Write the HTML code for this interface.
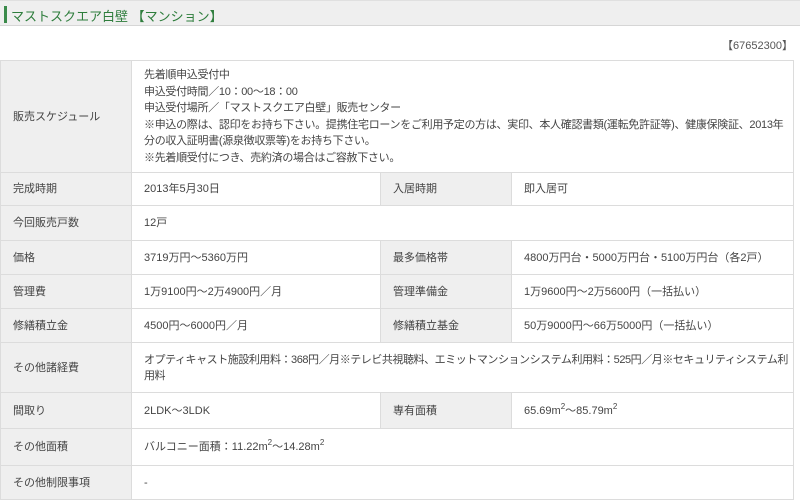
<!DOCTYPE html>
<html><head><meta charset="utf-8"><style>
body{margin:0;width:800px;height:500px;background:#fff;font-family:"Liberation Sans","Noto Sans CJK JP",sans-serif;font-size:11px;color:#444;position:relative;overflow:hidden}
.hd{position:absolute;left:0;top:0;width:800px;height:26px;background:#efefef;border-bottom:1px solid #d6d6d6;border-top:1px solid #e0e0e0;box-sizing:border-box}
.hd .bar{position:absolute;left:4px;top:5px;width:3px;height:17px;background:#3a8a4a}
.hd .t{position:absolute;left:11px;top:5px;font-size:13px;color:#2e7d3c}
.code{position:absolute;right:7px;top:37px;font-size:11px;color:#555}
.c{position:absolute;box-sizing:border-box;border:1px solid #dcdcdc;padding:0 12px;display:flex;align-items:center;line-height:16px}
.l{background:#efefef}
.tight{letter-spacing:-0.3px;padding-right:2px}
sup{font-size:8px;vertical-align:5px;line-height:0}
</style></head><body>
<div class="hd"><div class="bar"></div><div class="t">マストスクエア白壁 【マンション】</div></div>
<div class="code">【67652300】</div>

<div class="c l" style="left:0;top:60px;width:132px;height:113px">販売スケジュール</div>
<div class="c tight" style="left:131px;top:60px;width:663px;height:113px;line-height:16.5px">先着順申込受付中<br>申込受付時間／10：00～18：00<br>申込受付場所／「マストスクエア白壁」販売センター<br>※申込の際は、認印をお持ち下さい。提携住宅ローンをご利用予定の方は、実印、本人確認書類(運転免許証等)、健康保険証、2013年分の収入証明書(源泉徴収票等)をお持ち下さい。<br>※先着順受付につき、売約済の場合はご容赦下さい。</div>

<div class="c l" style="left:0;top:172px;width:132px;height:34px">完成時期</div>
<div class="c" style="left:131px;top:172px;width:250px;height:34px">2013年5月30日</div>
<div class="c l" style="left:380px;top:172px;width:132px;height:34px">入居時期</div>
<div class="c" style="left:511px;top:172px;width:283px;height:34px">即入居可</div>

<div class="c l" style="left:0;top:205px;width:132px;height:36px">今回販売戸数</div>
<div class="c" style="left:131px;top:205px;width:663px;height:36px">12戸</div>

<div class="c l" style="left:0;top:240px;width:132px;height:35px">価格</div>
<div class="c" style="left:131px;top:240px;width:250px;height:35px">3719万円～5360万円</div>
<div class="c l" style="left:380px;top:240px;width:132px;height:35px">最多価格帯</div>
<div class="c" style="left:511px;top:240px;width:283px;height:35px">4800万円台・5000万円台・5100万円台（各2戸）</div>

<div class="c l" style="left:0;top:274px;width:132px;height:35px">管理費</div>
<div class="c" style="left:131px;top:274px;width:250px;height:35px">1万9100円～2万4900円／月</div>
<div class="c l" style="left:380px;top:274px;width:132px;height:35px">管理準備金</div>
<div class="c" style="left:511px;top:274px;width:283px;height:35px">1万9600円～2万5600円（一括払い）</div>

<div class="c l" style="left:0;top:308px;width:132px;height:35px">修繕積立金</div>
<div class="c" style="left:131px;top:308px;width:250px;height:35px">4500円～6000円／月</div>
<div class="c l" style="left:380px;top:308px;width:132px;height:35px">修繕積立基金</div>
<div class="c" style="left:511px;top:308px;width:283px;height:35px">50万9000円～66万5000円（一括払い）</div>

<div class="c l" style="left:0;top:342px;width:132px;height:51px">その他諸経費</div>
<div class="c" style="left:131px;top:342px;width:663px;height:51px;letter-spacing:-0.45px;padding-right:1px">オプティキャスト施設利用料：368円／月※テレビ共視聴料、エミットマンションシステム利用料：525円／月※セキュリティシステム利用料</div>

<div class="c l" style="left:0;top:392px;width:132px;height:37px">間取り</div>
<div class="c" style="left:131px;top:392px;width:250px;height:37px">2LDK～3LDK</div>
<div class="c l" style="left:380px;top:392px;width:132px;height:37px">専有面積</div>
<div class="c" style="left:511px;top:392px;width:283px;height:37px"><span>65.69m<sup>2</sup>～85.79m<sup>2</sup></span></div>

<div class="c l" style="left:0;top:428px;width:132px;height:38px">その他面積</div>
<div class="c" style="left:131px;top:428px;width:663px;height:38px"><span>バルコニー面積：11.22m<sup>2</sup>～14.28m<sup>2</sup></span></div>

<div class="c l" style="left:0;top:465px;width:132px;height:35px">その他制限事項</div>
<div class="c" style="left:131px;top:465px;width:663px;height:35px">-</div>
</body></html>
